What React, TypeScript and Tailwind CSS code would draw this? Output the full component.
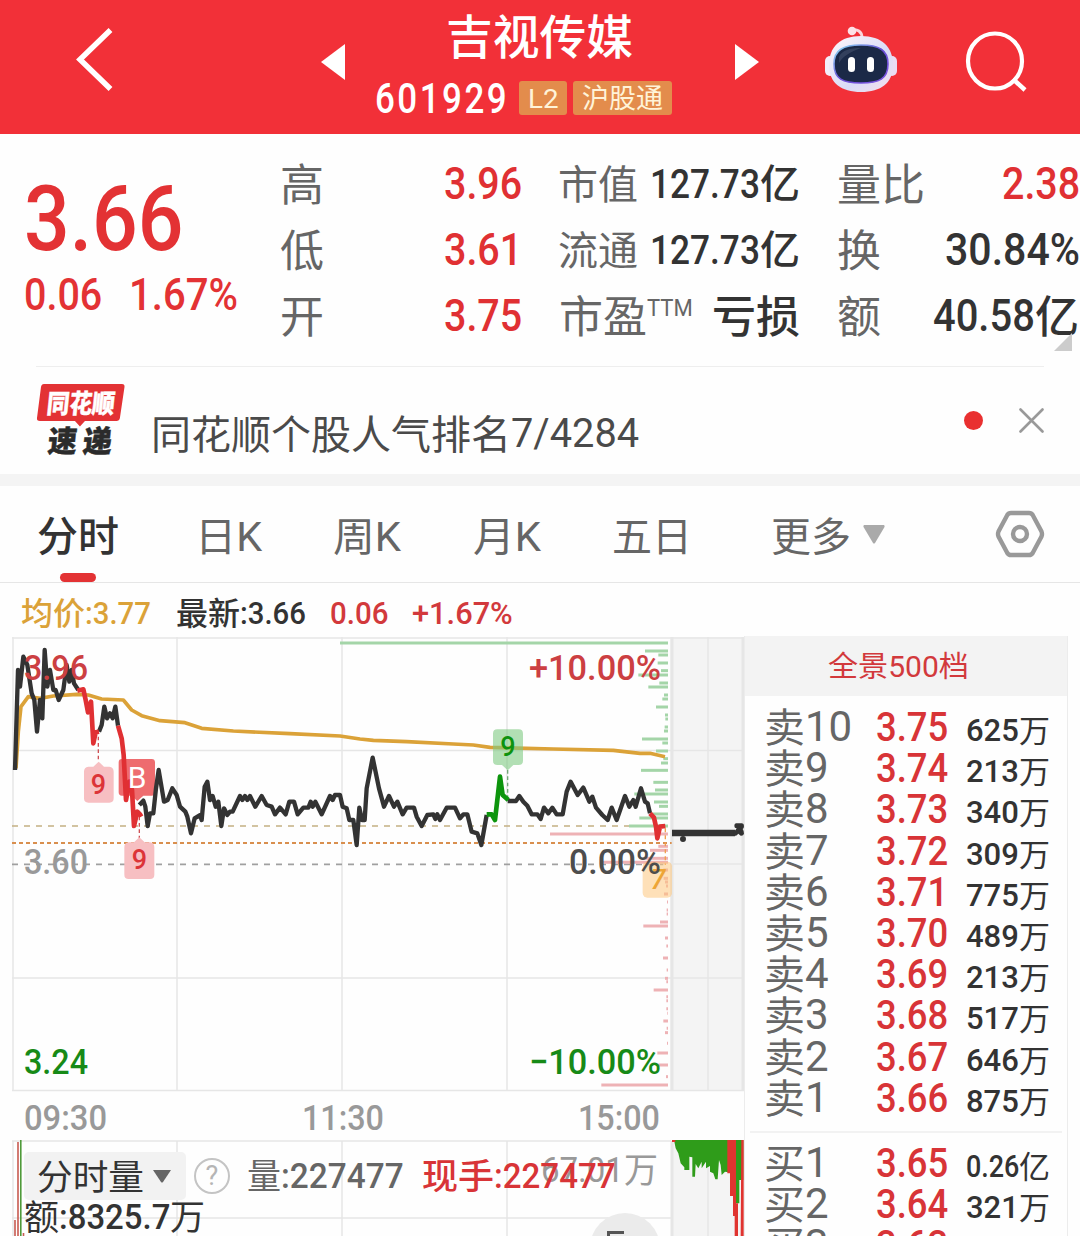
import { useLayoutEffect, useRef, type ReactNode } from "react";

/** Text squeezed or stretched horizontally so that it fills the width its class gives. */
function Fit({ className, children }: { className: string; children: ReactNode }) {
  const outer = useRef<HTMLSpanElement>(null);
  const inner = useRef<HTMLSpanElement>(null);
  useLayoutEffect(() => {
    if (outer.current && inner.current) {
      const k = outer.current.clientWidth / inner.current.offsetWidth;
      inner.current.style.transform = `scaleX(${k})`;
    }
  }, []);
  return (
    <span ref={outer} className={`inline-block shrink-0 ${className}`}>
      <span ref={inner} className="inline-block origin-left whitespace-nowrap">
        {children}
      </span>
    </span>
  );
}

function Robot() {
  return (
    <svg className="h-[70px] w-[74px]" viewBox="0 0 74 70">
      <defs>
        <linearGradient id="shell" x1="0" y1="0" x2="1" y2="1">
          <stop offset="0" stopColor="#fff6fa" />
          <stop offset="0.6" stopColor="#d9dcf7" />
          <stop offset="1" stopColor="#f6dfec" />
        </linearGradient>
        <linearGradient id="rim" x1="0" y1="0" x2="1" y2="1">
          <stop offset="0" stopColor="#8fe4f5" />
          <stop offset="0.5" stopColor="#6a4fd8" />
          <stop offset="1" stopColor="#7d55e0" />
        </linearGradient>
      </defs>
      <path d="M38 13 C38 6 33 4 28 5" fill="none" stroke="#fbd5dc" strokeWidth="3" />
      <circle cx="28" cy="6" r="4.3" fill="#fde1e7" />
      <rect x="1" y="31" width="10" height="20" rx="5" fill="#f3eefa" />
      <rect x="63" y="31" width="10" height="20" rx="5" fill="#eadcf2" />
      <path d="M37 11 C58 11 69 22 69 40 C69 58 57 67 37 67 C17 67 5 58 5 40 C5 22 16 11 37 11Z" fill="url(#shell)" />
      <path d="M37 20 C55 20 64 25 64 39 C64 54 55 58 37 58 C19 58 10 54 10 39 C10 25 19 20 37 20Z" fill="#1b2947" stroke="url(#rim)" strokeWidth="1.6" />
      <path d="M15 32 C18 25 26 23 37 23 C26 27 19 31 15 38Z" fill="#44506c" opacity="0.6" />
      <rect x="24" y="32" width="7" height="15" rx="3.5" fill="#fff" />
      <rect x="43" y="32" width="7" height="15" rx="3.5" fill="#fff" />
    </svg>
  );
}

function Header() {
  return (
    <header className="flex h-[134px] bg-[#f23038] text-white">
      <div className="w-[321px] pt-[27px] pl-[75px]">
        <svg className="h-[66px] w-[40px]" viewBox="0 0 40 66">
          <path d="M35.500 3 L5 32.500 L35.500 62" fill="none" stroke="#fff" strokeWidth="5.500" />
        </svg>
      </div>
      <svg className="mt-[44px] h-[36px] w-[24px]" viewBox="0 0 24 36">
        <path d="M0 18 L24 0 V36Z" fill="#fff" />
      </svg>
      <div className="w-[389px] pt-[10px]">
        <div className="pl-[101px] text-[46.500px] leading-[56px] font-medium">
          <Fit className="w-[187px]">吉视传媒</Fit>
        </div>
        <div className="flex items-center pl-[30px]">
          <Fit className="mt-[2px] w-[134px] text-[42px] leading-[62px] font-medium tracking-[3px]">601929</Fit>
          <span className="ml-[10px] flex h-[34px] w-[48px] justify-center rounded-[3px] bg-[#e38c4c] text-[26px] leading-[36px] text-[#fff3d8]">
            <Fit className="w-[31px]">L2</Fit>
          </span>
          <span className="ml-[6px] flex h-[34px] w-[99px] justify-center rounded-[3px] bg-[#e38c4c] text-[27px] leading-[37px] text-[#fff3d8]">
            <Fit className="w-[81px]">沪股通</Fit>
          </span>
        </div>
      </div>
      <svg className="mt-[44px] ml-px h-[36px] w-[24px]" viewBox="0 0 24 36">
        <path d="M0 0 L24 18 L0 36Z" fill="#fff" />
      </svg>
      <div className="mt-[25px] ml-[65px]">
        <Robot />
      </div>
      <svg className="mt-[30px] ml-[66px] h-[64px] w-[66px]" viewBox="0 0 66 64">
        <ellipse cx="31" cy="31" rx="27" ry="27.500" fill="none" stroke="#fff" strokeWidth="4.200" />
        <path d="M49 49 L61 60" stroke="#fff" strokeWidth="4.500" />
      </svg>
    </header>
  );
}

const dark = "text-[#333]";
const red = "text-[#e03033]";

function Stats() {
  return (
    <section className="relative flex h-[232px] bg-[#fefefe] text-[#666]">
      <div className="w-[280px] pt-[41px] pl-[24px] text-[#e33234]">
        <div className="text-[90px] leading-[90px] font-medium">
          <Fit className="w-[159px]">3.66</Fit>
        </div>
        <div className="flex gap-[27px] text-[44.500px] leading-[60px] font-medium">
          <Fit className="w-[78px]">0.06</Fit>
          <Fit className="w-[109px]">1.67%</Fit>
        </div>
      </div>
      <div className="w-[279px] pt-[17px] text-[44px] leading-[66px]">
        {[["高", "3.96"], ["低", "3.61"], ["开", "3.75"]].map(([k, v]) => (
          <div key={k} className="flex h-[66px] items-baseline text-[#666]">
            <span className="relative top-[2px] w-[164px]">{k}</span>
            <Fit className="w-[78px] text-[45px] font-medium text-[#e03033]">{v}</Fit>
          </div>
        ))}
      </div>
      <div className="w-[278px] pt-[17px] leading-[66px]">
        {["市值", "流通"].map((k) => (
          <div key={k} className="flex h-[66px] items-baseline text-[40px]">
            <span className="relative top-px -ml-px w-[92px]">{k}</span>
            <Fit className="w-[110px] text-[41px] font-medium text-[#333]">127.73</Fit>
            <span className="font-medium text-[#333]">亿</span>
          </div>
        ))}
        <div className="flex h-[66px] items-baseline text-[44px]">
          <span className="relative top-[2px]">市盈</span>
          <span className="relative -top-[15px]">
            <Fit className="w-[46px] text-[24px] leading-[30px]">TTM</Fit>
          </span>
          <span className={`relative top-[2px] ml-[19px] font-medium ${dark}`}>亏损</span>
        </div>
      </div>
      <div className="w-[243px] pt-[17px] text-[44px] leading-[66px]">
        <div className="flex h-[66px] items-baseline justify-between">
          <span className="relative top-[2px]">量比</span>
          <Fit className={`w-[78px] text-[45px] font-medium ${red}`}>2.38</Fit>
        </div>
        <div className="flex h-[66px] items-baseline justify-between">
          <span className="relative top-[2px]">换</span>
          <Fit className={`w-[135px] text-[45px] font-medium ${dark}`}>30.84%</Fit>
        </div>
        <div className="flex h-[66px] items-baseline">
          <span className="relative top-[2px] w-[96px]">额</span>
          <Fit className={`w-[102px] text-[45px] font-medium ${dark}`}>40.58</Fit>
          <span className={`relative top-[2px] font-medium ${dark}`}>亿</span>
        </div>
      </div>
      <svg className="absolute top-[199px] left-[1054px] h-[18px] w-[18px]" viewBox="0 0 18 18">
        <path d="M0 18 L18 0 V18Z" fill="#ccc" />
      </svg>
    </section>
  );
}

function News() {
  return (
    <section className="mx-[36px] flex h-[108px] border-t border-[#eee]">
      <svg className="mt-[16px] h-[76px] w-[92px]" viewBox="0 0 92 76">
        <path d="M8 1 H86 Q89 1 88.600 4 L84 35 Q83.500 38 80.500 38 H49 L44 43.500 L39 38 H4 Q0.500 38 1 35 L5 4 Q5.500 1 8 1Z" fill="#e33234" />
        <text x="0" y="0" transform="translate(10 30) skewX(-6)" textLength="68" lengthAdjust="spacingAndGlyphs" fill="#fff" stroke="#fff" strokeWidth="0.400" className="font-['Noto_Sans_CJK_SC',sans-serif] text-[26px] font-black">
          同花顺
        </text>
        <g className="font-['Noto_Sans_CJK_SC',sans-serif] text-[30px] font-black" fill="#2b2b2b" stroke="#2b2b2b" strokeWidth="0.500">
          <text transform="translate(11 69) skewX(-6)" textLength="29" lengthAdjust="spacingAndGlyphs">速</text>
          <text transform="translate(46 69) skewX(-6)" textLength="29" lengthAdjust="spacingAndGlyphs">递</text>
        </g>
      </svg>
      <div className="ml-[23px] flex w-[787px] items-baseline pt-[35px] text-[40px] leading-[60px] text-[#4a4a4a]">
        <span className="relative top-[3px]">同花顺个股人气排名</span>
        <Fit className="relative top-px w-[128px] text-[41px]">7/4284</Fit>
      </div>
      <span className="mt-[44px] ml-[27px] h-[19px] w-[19px] shrink-0 rounded-full bg-[#e93030]" />
      <svg className="mt-[41px] ml-[36px] h-[25px] w-[25px] shrink-0" viewBox="0 0 25 25">
        <path d="M1.500 1.500 L23.500 23.500 M23.500 1.500 L1.500 23.500" stroke="#999" strokeWidth="2.600" strokeLinecap="round" />
      </svg>
    </section>
  );
}

function Tabs() {
  return (
    <nav className="flex h-[97px] border-b border-[#e6e6e6] text-[40px] leading-[103px] text-[#666]">
      <div className="flex w-[195px] flex-col pl-[37px]">
        <span className="h-[87px] text-[41px] font-medium text-[#333]">分时</span>
        <span className="ml-[23px] h-[9px] w-[36px] rounded-full bg-[#e33234]" />
      </div>
      <Fit className="mr-[71px] w-[67px]">日K</Fit>
      <Fit className="mr-[72px] w-[68px]">周K</Fit>
      <Fit className="mr-[71px] w-[68px]">月K</Fit>
      <div className="w-[159px]">五日</div>
      <div className="flex w-[224px]">
        更多
        <svg className="mt-[39px] ml-[12px] h-[19px] w-[22px]" viewBox="0 0 22 19">
          <path d="M1 0 H21 Q22 1 21.500 2 L12 18 Q11 19 10 18 L0.500 2 Q0 1 1 0Z" fill="#aaa" />
        </svg>
      </div>
      <svg className="mt-[24px] h-[48px] w-[50px]" viewBox="0 0 50 48">
        <path d="M16 3 H34 Q36.500 3 37.700 5 L46.500 21.500 Q47.500 24 46.500 26.500 L37.700 43 Q36.500 45 34 45 H16 Q13.500 45 12.300 43 L3.500 26.500 Q2.500 24 3.500 21.500 L12.300 5 Q13.500 3 16 3Z" fill="none" stroke="#999" strokeWidth="4.400" />
        <circle cx="25" cy="24" r="7" fill="none" stroke="#999" strokeWidth="4.400" />
      </svg>
    </nav>
  );
}

/* Depth bars: [y, left edge], in thirds of a pixel. */
const asks = [
  [24, 1020], [48, 1935], [60, 1975], [84, 1973], [107, 1983], [120, 1915], [144, 1978], [156, 1945], [180, 1992],
  [192, 1987], [216, 1968], [240, 1995], [252, 1996], [276, 1994], [288, 1992], [312, 1926], [324, 1987], [348, 1968],
  [371, 1990], [384, 1983], [406, 1923], [442, 1960], [465, 1965], [477, 1903], [501, 1962], [514, 1977], [537, 1955],
  [549, 1918], [573, 1887],
];
const bids = [
  [597, 1650], [634, 1975], [646, 1950], [670, 1930], [682, 1805], [705, 1990], [730, 1991], [741, 1995], [753, 1998],
  [777, 1992], [801, 2001], [825, 2000], [837, 2000], [861, 1980], [873, 1930], [909, 1995], [933, 1999], [969, 1989],
  [1005, 2000], [1030, 1995], [1040, 1999], [1065, 1961], [1085, 1999], [1097, 1999], [1121, 1999], [1135, 2002],
  [1158, 1990], [1180, 2000], [1193, 1995], [1225, 2001], [1254, 1972], [1290, 1975], [1325, 1998], [1350, 1804],
];

const line1 =
  "45,405 54,105 60,155 70,65 82,90 95,175 103,195 111,290 120,195 127,250 134,45 142,155 150,105 160,165 167,165 176,195 190,165 200,90 208,140 215,105 222,145 235,165";
const line2 = "297,290 305,270 313,215 321,250 330,235 338,250 346,215 354,272";
const line3 =
  "418,510 430,497 436,515 443,573 450,535 460,535 468,460 476,405 492,500 503,495 517,460 530,480 540,515 556,530 562,545 573,595 584,550 600,540 605,555 614,455 622,440 630,495 638,483 647,515 655,500 664,573 672,520 682,540 690,530 698,530 720,483 727,495 735,483 742,495 750,483 766,515 785,483 800,510 815,515 825,538 840,518 857,538 868,500 882,500 893,538 910,518 925,518 932,500 938,515 946,500 965,538 990,483 998,495 1005,480 1020,480 1028,515 1040,520 1048,555 1060,555 1070,630 1078,518 1086,555 1094,555 1100,460 1118,368 1137,460 1152,515 1167,483 1182,515 1192,500 1208,538 1220,518 1242,518 1250,545 1265,573 1282,540 1300,538 1306,552 1312,538 1320,555 1340,518 1365,518 1380,550 1390,538 1402,538 1415,590 1432,595 1444,630 1460,540";
const line4 =
  "1523,498 1548,498 1558,483 1570,500 1582,512 1595,538 1612,538 1622,552 1632,518 1645,535 1657,518 1670,538 1688,538 1700,470 1712,440 1733,480 1750,458 1768,500 1777,485 1788,518 1807,540 1823,555 1835,518 1850,555 1875,483 1888,515 1900,495 1907,515 1923,460 1935,500 1943,505 1950,535";
const average =
  "48,400 55,290 63,215 85,185 120,190 160,183 230,178 265,180 305,192 370,195 395,225 425,242 480,257 555,263 605,280 700,288 870,296 1020,303 1080,312 1120,316 1220,320 1360,327 1420,330 1470,337 1660,342 1840,346 1920,355 1950,355 1995,365";

function AxisText({ x, y, w, fill, children }: { x: number; y: number; w: number; fill: string; children: string }) {
  return (
    <text x={x} y={y} textLength={w} lengthAdjust="spacingAndGlyphs" fill={fill} className="text-[35.500px] font-medium">
      {children}
    </text>
  );
}

/* Canvas origin is 2px above the plot's top border. */
function Chart() {
  return (
    <svg className="h-[601px] w-[744px]" viewBox="0 635 744 601">
      <rect x="670" y="637" width="74" height="454" fill="#f4f4f4" />
      <rect x="671" y="1141" width="73" height="95" fill="#f4f4f4" />
      <g stroke="#e6e6e6" strokeWidth="1.500" fill="none">
        <path d="M12 638 H744 M12 750.500 H744 M670 864 H744 M12 978 H744 M12 1090.500 H744" />
        <path d="M13 637 V1091 M177 637 V1091 M342 637 V1091 M507 637 V1091 M708 637 V1091" />
        <path d="M12 1141 H671 M12 1218 H671 M13 1141 V1236 M177 1141 V1236 M342 1141 V1236 M507 1141 V1236 M708 1141 V1236" />
        <path d="M672 637 V1091 M672 1141 V1236 M743 637 V1091" strokeWidth="3" />
      </g>

      <g transform="translate(0 635) scale(0.33333)">
        <path d="M36 573 H1890" stroke="#c4b083" strokeWidth="5" strokeDasharray="18 18" />
        <path d="M36 624 H2015" stroke="#d98f4e" strokeWidth="6" strokeDasharray="12 9" />
        <path d="M36 688 H1990" stroke="#a0a0a0" strokeWidth="5" strokeDasharray="18 18" />

        {asks.map(([y, x]) => (
          <path key={y} d={`M${x} ${y} H2004`} stroke="#a4d5a8" strokeWidth="9" />
        ))}
        {bids.map(([y, x]) => (
          <path key={y} d={`M${x} ${y} H2004`} stroke="#eeb2b5" strokeWidth="9" />
        ))}
        <path d="M1996 580 V690" stroke="#f0a050" strokeWidth="4" strokeDasharray="12 9" />

        <path d="M295 305 V380 M418 545 V610" stroke="#cf5054" strokeWidth="4" strokeDasharray="11 8" />
        <path d="M1523 405 V492" stroke="#75a87a" strokeWidth="4" strokeDasharray="11 8" />

        <path d="M265 395 H280 L296 380 L312 395 H328 Q341 397 341 410 V490 Q341 503 328 503 H265 Q252 503 252 490 V410 Q252 397 265 395Z" fill="#f7bfc2" />
        <path d="M386 622 H402 L418 607 L434 622 H450 Q463 624 463 637 V719 Q463 732 450 732 H386 Q373 732 373 719 V637 Q373 624 386 622Z" fill="#f7bfc2" />
        <path d="M366 372 H455 Q465 372 465 382 V472 Q465 482 455 482 H430 L412 498 L394 482 H366 Q356 482 356 472 V382 Q356 372 366 372Z" fill="#ee6c6f" />

        <polyline points={average} fill="none" stroke="#dba238" strokeWidth="11" strokeLinejoin="round" />
        <path d="M1492 283 H1556 Q1569 283 1569 296 V377 Q1569 390 1556 390 H1540 L1523 406 L1506 390 H1492 Q1479 390 1479 377 V296 Q1479 283 1492 283Z" fill="#7fca82" fillOpacity="0.600" />
        <rect x="1928" y="680" width="88" height="108" rx="14" fill="#fdc77e" fillOpacity="0.550" />

        <g fill="none" stroke="#333" strokeWidth="13" strokeLinejoin="round">
          <polyline points={line1} />
          <polyline points={line2} />
          <polyline points={line3} />
          <polyline points={line4} />
          <path d="M2016 594 H2205" strokeWidth="19" />
        </g>
        <circle cx="2049" cy="612" r="9" fill="#333" />
        <path d="M2208 565 H2226 Q2232 565 2232 573 Q2232 580 2228 582 Q2232 588 2232 596 Q2230 603 2222 602 L2215 596 Q2210 604 2200 603 V586 H2206 L2210 580 Q2203 580 2203 573 Q2203 566 2208 565Z" fill="#333" />
        <g fill="none" stroke="#e03033" strokeWidth="14" strokeLinejoin="round">
          <polyline points="232,167 250,163 257,195 264,232 273,200 280,325 287,292 297,290" />
          <polyline points="354,272 365,310 371,360 378,495 388,440 396,465 402,573 412,530 420,538 424,545" />
          <polyline points="1950,535 1962,548 1968,575 1972,610 1980,575 1996,573" />
        </g>
        <polyline points="1460,538 1475,538 1485,555 1500,425 1508,480 1525,495" fill="none" stroke="#0d950d" strokeWidth="14" strokeLinejoin="round" />
      </g>

      <g className="text-[27px] font-medium" textAnchor="middle">
        <text x="98.500" y="793.500" fill="#dc3438">9</text>
        <text x="139.500" y="869" fill="#dc3438">9</text>
        <text x="508" y="755.500" fill="#0d920d">9</text>
        <text x="658" y="889" fill="#eda536" className="italic">7</text>
        <text x="137" y="788" fill="#fff" className="text-[30px] font-normal">B</text>
      </g>

      <AxisText x={24} y={680} w={64} fill="#cc3f42">3.96</AxisText>
      <AxisText x={529} y={680} w={132} fill="#cc3f42">+10.00%</AxisText>
      <AxisText x={24} y={873.500} w={64} fill="#999">3.60</AxisText>
      <AxisText x={569} y={873.500} w={92} fill="#4d4d4d">0.00%</AxisText>
      <AxisText x={24} y={1074} w={64} fill="#178a17">3.24</AxisText>
      <AxisText x={529} y={1074} w={132} fill="#178a17">−10.00%</AxisText>
      <AxisText x={24} y={1129.500} w={83} fill="#999">09:30</AxisText>
      <AxisText x={302} y={1129.500} w={82} fill="#999">11:30</AxisText>
      <AxisText x={578} y={1129.500} w={82} fill="#999">15:00</AxisText>

      <path d="M18 1142 V1236 M15 1220 V1236 M23.500 1233 V1236" stroke="#c85a50" strokeWidth="1.600" />
      <path d="M20.800 1140 V1236" stroke="#4f9a3a" strokeWidth="1.600" />
      <g transform="translate(400 1090) scale(0.33333)">
        <path d="M822 150 H1030 V270 H1018 V340 H1008 V250 L975 245 L965 255 L962 225 L957 210 L953 268 H946 L940 250 L930 245 V228 L918 235 V215 L905 235 V215 L895 235 L887 222 L885 260 H877 V202 L868 200 V240 H853 V232 L842 220 L835 190 L827 175Z" fill="#2f9c1a" />
        <path d="M816 150 H826 V156 H816Z M982 150 H1008 V438 H1004 V378 H999 V318 H990 V250 H982Z M1004 340 H1014 V438 H1004Z M1024 150 H1031 V438 H1022Z" fill="#e03430" />
      </g>
    </svg>
  );
}

function VolumeBar() {
  return (
    <div className="absolute top-[569px] left-0 w-[744px] text-[35px]">
      <div className="flex h-[48px] items-baseline pl-[24px] leading-[50px] whitespace-nowrap">
        <div className="flex h-[48px] w-[162px] rounded-[5px] bg-[#f2f2f2] pl-[13px] text-[#333]">
          <Fit className="relative top-[2px] w-[107px]">分时量</Fit>
          <svg className="mt-[18px] ml-[9px] h-[13px] w-[18px]" viewBox="0 0 18 13">
            <path d="M0 0 H18 L10 12 Q9 13 8 12Z" fill="#666" />
          </svg>
        </div>
        <span className="ml-[8px] flex h-[36px] w-[36px] justify-center self-center rounded-full border-[2.500px] border-[#c4c4c4] text-[27px] leading-[32px] text-[#b5b5b5]">
          ?
        </span>
        <Fit className="relative top-px ml-[17px] w-[34px] text-[#666]">量</Fit>
        <Fit className="w-[123px] font-medium text-[#666]">:227477</Fit>
        <Fit className="relative top-px ml-[18px] w-[72px] font-medium text-[#d83437]">现手</Fit>
        <Fit className="relative z-10 w-[122px] font-medium text-[#d83437]">:227477</Fit>
        <Fit className="relative -top-[6px] -ml-[75px] w-[83px] text-[#999]">67.01</Fit>
        <Fit className="relative -top-[5px] w-[34px] text-[#999]">万</Fit>
      </div>
      <div className="flex h-[40px] items-baseline pl-[24px] leading-[36px] text-[#333]">
        <Fit className="relative top-px w-[35px]">额</Fit>
        <Fit className="w-[111px] font-medium">:8325.7</Fit>
        <Fit className="relative top-px w-[35px]">万</Fit>
      </div>
    </div>
  );
}

const sells = [
  ["卖", "10", "3.75", "625"], ["卖", "9", "3.74", "213"], ["卖", "8", "3.73", "340"], ["卖", "7", "3.72", "309"],
  ["卖", "6", "3.71", "775"], ["卖", "5", "3.70", "489"], ["卖", "4", "3.69", "213"], ["卖", "3", "3.68", "517"],
  ["卖", "2", "3.67", "646"], ["卖", "1", "3.66", "875"],
];
const buys = [["买", "1", "3.65", "0.26"], ["买", "2", "3.64", "321"], ["买", "3", "3.63", "228"]];

function BookRow({ row }: { row: string[] }) {
  return (
    <div className="flex h-[41.200px] items-baseline pl-[19px] text-[40px] leading-[41px] whitespace-nowrap text-[#666]">
      <Fit className="relative top-px w-[41px]">{row[0]}</Fit>
      <span className="w-[71px] text-[42px]">{row[1]}</span>
      <Fit className="w-[72px] text-[41px] font-medium text-[#d83437]">{row[2]}</Fit>
      <Fit className="ml-[18px] w-[53px] text-[31px] font-medium text-[#333]">{row[3]}</Fit>
      <Fit className="relative top-px w-[31px] text-[31px] text-[#333]">{row[3].includes(".") ? "亿" : "万"}</Fit>
    </div>
  );
}

function OrderBook() {
  return (
    <aside className="mt-[53px] h-[600px] w-[324px] border-x border-[#ececec] bg-[#fefefe]">
      <div className="flex h-[60px] items-baseline bg-[#f3f3f3] pl-[83px] text-[29px] leading-[62px] text-[#d2393c]">
        <Fit className="w-[141px]">全景500档</Fit>
      </div>
      <div className="h-[435px] pt-[10px]">
        {sells.map((r) => (
          <BookRow key={r[2]} row={r} />
        ))}
      </div>
      <div className="mr-[5px] ml-[5px] border-t-2 border-[#f2f2f2] pt-[9px]" />
      {buys.map((r) => (
        <BookRow key={r[2]} row={r} />
      ))}
    </aside>
  );
}

export default function App() {
  return (
    <div className="flex h-[1236px] w-[1080px] flex-col overflow-hidden bg-[#fefefe] font-[Roboto,'Noto_Sans_CJK_SC',sans-serif]">
      <Header />
      <Stats />
      <News />
      <div className="h-[12px] bg-[#f4f4f4]" />
      <Tabs />
      <main className="flex h-[653px]">
        <div className="relative w-[744px]">
          <div className="flex h-[52px] items-baseline pl-[21px] text-[32px] leading-[60px] font-medium whitespace-nowrap">
            <Fit className="relative top-px w-[64px] text-[#dba238]">均价</Fit>
            <Fit className="w-[66px] text-[#dba238]">:3.77</Fit>
            <Fit className="relative top-px ml-[25px] w-[64px] text-[#333]">最新</Fit>
            <Fit className="w-[66px] text-[#333]">:3.66</Fit>
            <Fit className="ml-[24px] w-[58px] text-[#d2393c]">0.06</Fit>
            <Fit className="ml-[24px] w-[101px] text-[#d2393c]">+1.67%</Fit>
          </div>
          <Chart />
          <VolumeBar />
          <div className="absolute top-[630px] left-[590px] h-[70px] w-[70px] rounded-full bg-[#ebebeb] pt-[18px] pl-[17px]">
            <div className="h-[20px] w-[17px] border-t-3 border-l-3 border-[#555]" />
          </div>
        </div>
        <OrderBook />
      </main>
    </div>
  );
}
